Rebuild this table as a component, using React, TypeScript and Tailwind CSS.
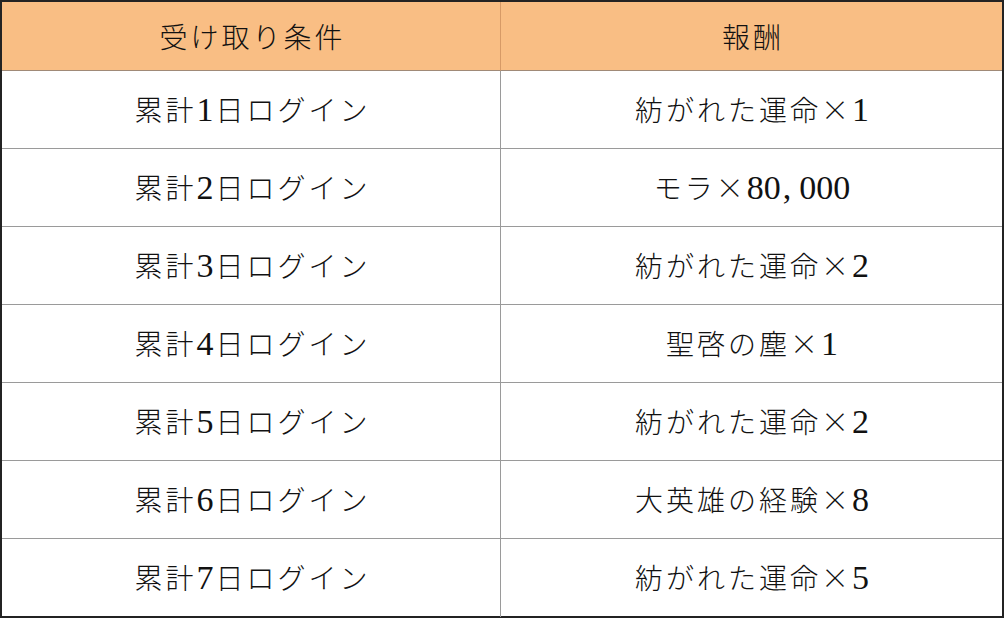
import React from "react";

const rows: [string, string][] = [
  ["累計1日ログイン", "紡がれた運命×1"],
  ["累計2日ログイン", "モラ×80,000"],
  ["累計3日ログイン", "紡がれた運命×2"],
  ["累計4日ログイン", "聖啓の塵×1"],
  ["累計5日ログイン", "紡がれた運命×2"],
  ["累計6日ログイン", "大英雄の経験×8"],
  ["累計7日ログイン", "紡がれた運命×5"],
];

function Txt({ s }: { s: string }) {
  const parts = s.split(/(×|,|[0-9]+)/).filter((p) => p !== "");
  return (
    <span className="pl-[3px] whitespace-nowrap">
      {parts.map((p, i) =>
        p === "×" ? (
          <span key={i} className="font-['Noto_Sans_CJK_JP',sans-serif] font-light tracking-[3px]">
            ×
          </span>
        ) : p === "," ? (
          <span key={i} className="font-['Liberation_Serif',serif] text-[34px] mr-[8px]">
            ,
          </span>
        ) : /^[0-9]+$/.test(p) ? (
          <span key={i} className="font-['Liberation_Serif',serif] text-[34px] tracking-[0px] mr-[2px]">
            {p}
          </span>
        ) : (
          <span key={i} className="tracking-[3px]">{p}</span>
        )
      )}
    </span>
  );
}

export default function App() {
  return (
    <div className="w-[1004px] h-[618px] bg-white border-2 border-[#232323] font-['Noto_Sans_CJK_JP','Liberation_Serif',serif] font-light text-[28px] text-[#111] leading-none">
      <div className="grid grid-cols-[499px_1fr]">
        <div className="h-[69px] bg-[#f9be84] border-r border-b border-r-[#d79a66] border-b-[#a08a78] flex items-center justify-center">
          <Txt s="受け取り条件" />
        </div>
        <div className="h-[69px] bg-[#f9be84] border-b border-b-[#a08a78] flex items-center justify-center">
          <Txt s="報酬" />
        </div>
        {rows.map(([a, b], i) => (
          <React.Fragment key={i}>
            <div
              className={`h-[78px] border-r border-[#9a9a9a] flex items-center justify-center ${
                i < rows.length - 1 ? "border-b" : ""
              }`}
            >
              <Txt s={a} />
            </div>
            <div
              className={`h-[78px] border-[#9a9a9a] flex items-center justify-center ${
                i < rows.length - 1 ? "border-b" : ""
              }`}
            >
              <Txt s={b} />
            </div>
          </React.Fragment>
        ))}
      </div>
    </div>
  );
}
